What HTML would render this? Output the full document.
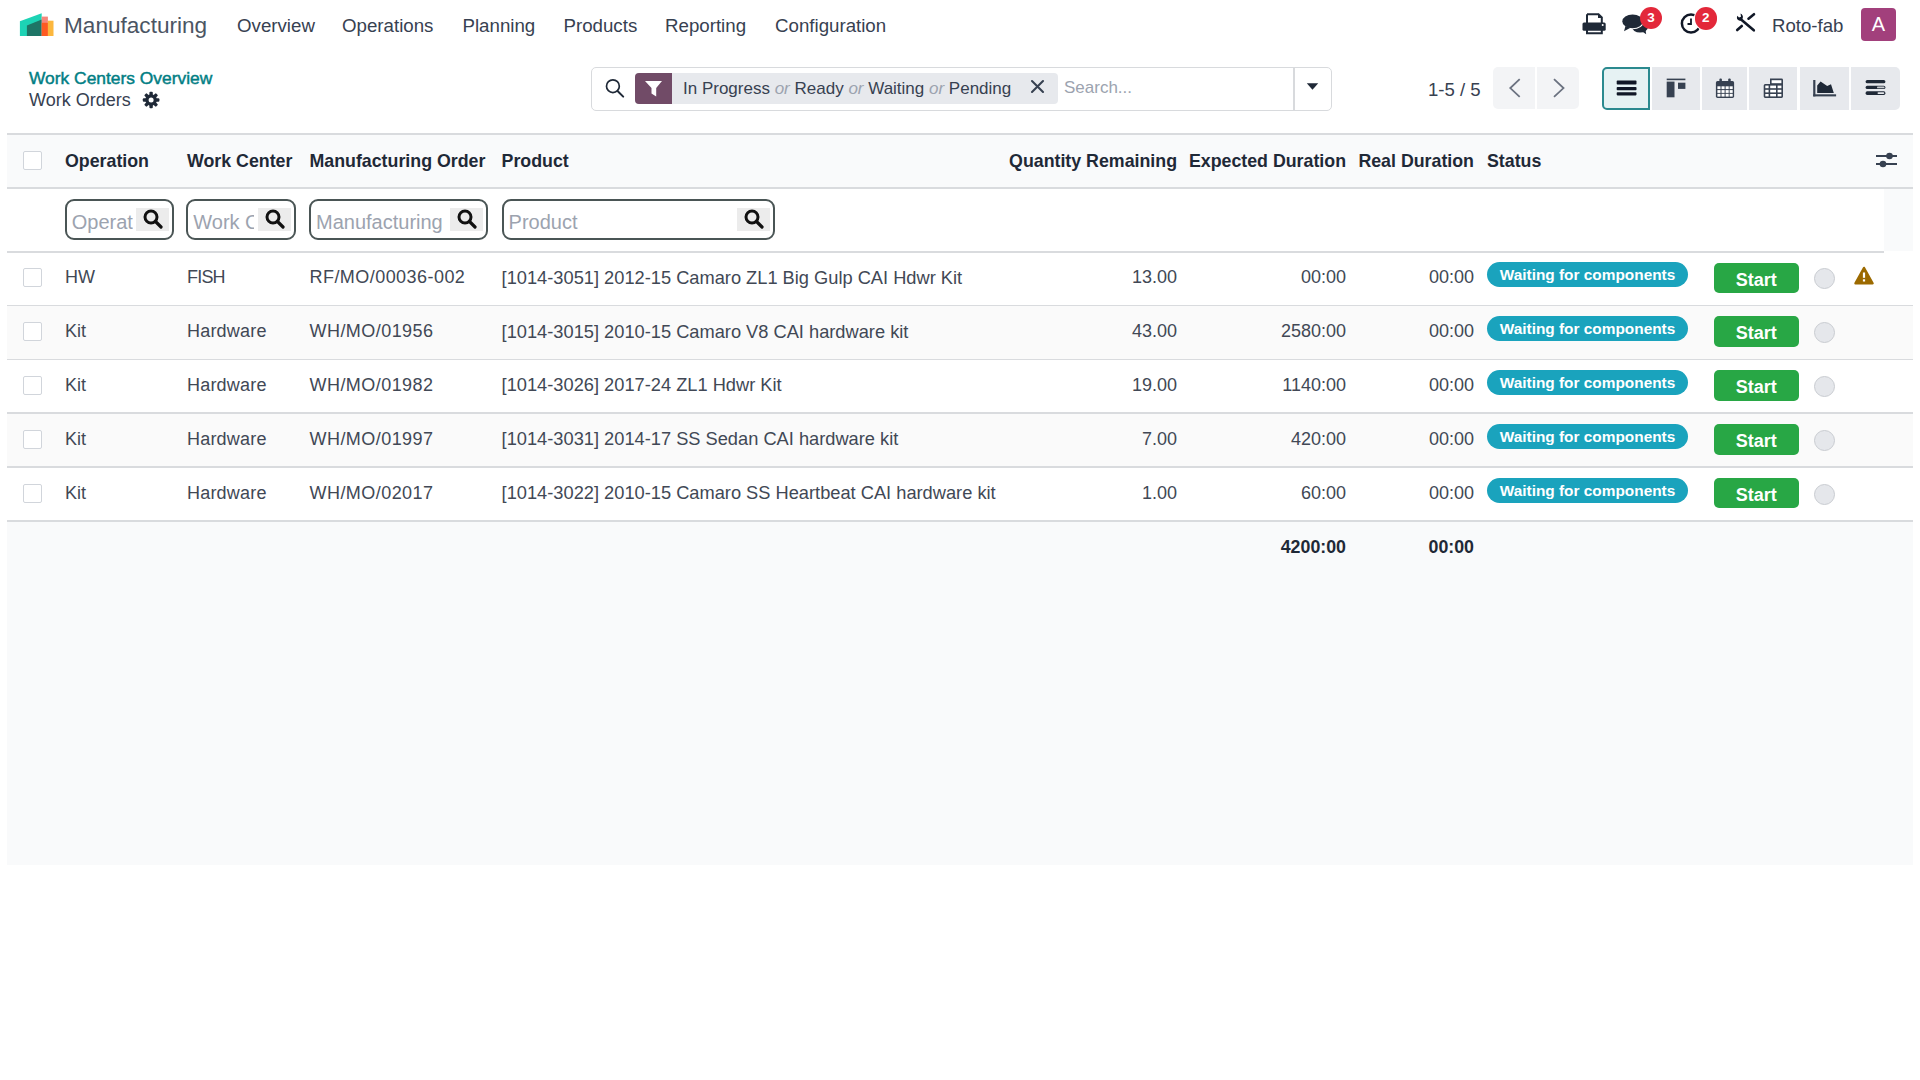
<!DOCTYPE html>
<html><head><meta charset="utf-8">
<style>
*{box-sizing:border-box;margin:0;padding:0}
html,body{width:1920px;height:1080px;background:#fff;overflow:hidden}
body{font-family:"Liberation Sans",sans-serif;color:#374151;position:relative}
.a{position:absolute;white-space:nowrap}
.nav{font-size:18.7px;color:#374151;top:14.8px;line-height:22px}
.ico{position:absolute}
/* table */
.tbl{position:absolute;left:7px;top:133px;width:1906px;height:732px;background:#f9fafb}
.hl{position:absolute;left:0;height:1.5px;background:#d9dbde}
.row{position:absolute;left:0;width:1906px;height:54px}
.cell{position:absolute;top:0;height:100%;display:flex;align-items:center;font-size:18px;color:#414855;white-space:nowrap}
.r{justify-content:flex-end}
.hdr{font-weight:bold;color:#1f2937;font-size:17.8px}
.cb{position:absolute;left:16px;width:19px;height:19px;border:1.5px solid #d1d5db;border-radius:2px;background:#fff}
.badge{position:absolute;left:1480px;width:201px;height:25px;border-radius:13px;background:#1aa3bd;color:#fff;font-weight:bold;font-size:15.4px;line-height:25px;text-align:center}
.start{position:absolute;left:1706.5px;width:85.5px;height:30.5px;border-radius:5px;background:#28a745;color:#fff;font-weight:bold;font-size:18px;line-height:31px;padding-top:2px;text-align:center}
.circ{position:absolute;left:1807px;width:21px;height:21px;border-radius:50%;background:#e5e7eb;border:1.5px solid #c9ccd1}
.fin{position:absolute;top:12px;height:41px;border:2px solid #4a5555;border-radius:9px;background:#fff;overflow:hidden}
.fin .ph{position:absolute;left:5px;top:2.5px;height:37px;line-height:37px;font-size:20px;color:#9ca3af;overflow:hidden;white-space:nowrap}
.fin .sb{position:absolute;top:7px;width:33px;height:23px;background:#ececec}
</style></head><body>

<!-- NAVBAR -->
<svg class="ico" style="left:19px;top:13px" width="36" height="24" viewBox="19 13 36 24">
<polygon points="19.9,21.3 41.7,13.3 41.7,36 19.9,36" fill="#1dd3b5"/>
<polygon points="26.9,25.5 41.7,19.6 41.7,36 26.9,36" fill="#1e7566"/>
<rect x="41.7" y="16.6" width="6.2" height="19.4" fill="#f6867b"/>
<rect x="41.7" y="22.8" width="6.2" height="13.2" fill="#fe5a22"/>
<rect x="47.9" y="20.7" width="5.6" height="15.3" fill="#fcb73e"/>
</svg>
<div class="a" style="left:64px;top:13px;font-size:22.6px;line-height:26px;color:#4b5563">Manufacturing</div>
<div class="a nav" style="left:237px">Overview</div>
<div class="a nav" style="left:342px">Operations</div>
<div class="a nav" style="left:462.5px">Planning</div>
<div class="a nav" style="left:563.5px">Products</div>
<div class="a nav" style="left:665px">Reporting</div>
<div class="a nav" style="left:775px">Configuration</div>

<div class="a" style="left:1772px;top:15px;font-size:18.6px;line-height:22px;color:#374151">Roto-fab</div>
<div class="a" style="left:1861px;top:8px;width:35px;height:33px;border-radius:4px;background:#a2407c;color:#fff;font-size:20px;line-height:33px;text-align:center">A</div>

<!-- CONTROL PANEL -->
<div class="a" style="left:29px;top:68px;font-size:17.4px;line-height:20px;-webkit-text-stroke:0.45px #017e84;color:#017e84">Work Centers Overview</div>
<div class="a" style="left:29px;top:90px;font-size:18px;line-height:21px;color:#374151">Work Orders</div>

<!-- search -->
<div class="a" style="left:591px;top:67px;width:741px;height:44px;border:1.5px solid #d8dadd;border-radius:5px;background:#fff"></div>
<div class="a" style="left:1293px;top:68px;width:1.5px;height:42px;background:#d8dadd"></div>
<div class="a" style="left:635px;top:73px;width:423px;height:31px;border-radius:4px;background:#e7e9ed"></div>
<div class="a" style="left:635px;top:73px;width:37px;height:31px;border-radius:4px 0 0 4px;background:#714b67"></div>
<div class="a" style="left:683px;top:78.5px;font-size:17px;line-height:20px;color:#374151">In Progress <i style="color:#9ca3af">or</i> Ready <i style="color:#9ca3af">or</i> Waiting <i style="color:#9ca3af">or</i> Pending</div>
<div class="a" style="left:1064px;top:78px;font-size:17px;line-height:20px;color:#9ca3af">Search...</div>

<!-- pager -->
<div class="a" style="left:1428px;top:79px;font-size:18.6px;line-height:21px;color:#374151">1-5 / 5</div>
<div class="a" style="left:1493px;top:67px;width:42px;height:42px;border-radius:5px 0 0 5px;background:#f3f4f6"></div>
<div class="a" style="left:1537px;top:67px;width:42px;height:42px;border-radius:0 5px 5px 0;background:#f3f4f6"></div>

<!-- view switcher -->
<div class="a" style="left:1602px;top:67px;width:48px;height:43px;border:2px solid #2b8a8f;border-radius:5px 0 0 5px;background:#e6f2f3"></div>
<div class="a" style="left:1652px;top:67px;width:48px;height:43px;background:#e7e9ed"></div>
<div class="a" style="left:1702px;top:67px;width:45px;height:43px;background:#e7e9ed"></div>
<div class="a" style="left:1749px;top:67px;width:48px;height:43px;background:#e7e9ed"></div>
<div class="a" style="left:1800px;top:67px;width:49px;height:43px;background:#e7e9ed"></div>
<div class="a" style="left:1851px;top:67px;width:49px;height:43px;border-radius:0 5px 5px 0;background:#e7e9ed"></div>


<!-- nav icons -->
<svg class="ico" style="left:1580px;top:11px" width="28" height="26" viewBox="1580 11 28 26">
<path d="M1587 14.2 H1598.5 L1601.8 17.5 V23" fill="none" stroke="#1f2937" stroke-width="2"/>
<path d="M1587 14.2 V23" stroke="#1f2937" stroke-width="2"/>
<path d="M1598 13.5 V18 H1602.5 Z" fill="#1f2937"/>
<rect x="1582.5" y="22.5" width="23.2" height="8.2" rx="1.5" fill="#1f2937"/>
<circle cx="1602.7" cy="25" r="1" fill="#fff"/>
<path d="M1587 29 V33.3 H1601.8 V29" fill="none" stroke="#1f2937" stroke-width="2"/>
</svg>
<svg class="ico" style="left:1620px;top:12px" width="30" height="24" viewBox="1620 12 30 24">
<ellipse cx="1640" cy="27" rx="8" ry="5.6" fill="#1f2937"/>
<path d="M1641.5 31 L1646.2 34.2 L1645.3 28.5 Z" fill="#1f2937"/>
<ellipse cx="1632.6" cy="21.4" rx="11.3" ry="7.8" fill="#fff"/>
<path d="M1624.8 25.5 L1622.9 32.3 L1631.5 28.2 Z" fill="#fff"/>
<ellipse cx="1632.6" cy="21.4" rx="10.3" ry="6.8" fill="#1f2937"/>
<path d="M1625.5 26 L1624 31.2 L1630.5 27.8 Z" fill="#1f2937"/>
</svg>
<div class="a" style="left:1640px;top:7px;width:22px;height:22px;border-radius:50%;background:#e3283a;color:#fff;font-weight:bold;font-size:13.5px;line-height:22px;text-align:center">3</div>
<svg class="ico" style="left:1679px;top:11px" width="26" height="26" viewBox="1679 11 26 26">
<circle cx="1691" cy="23.5" r="9.1" fill="none" stroke="#111827" stroke-width="2.5"/>
<path d="M1691 18.5 V24 H1687.5" fill="none" stroke="#111827" stroke-width="1.8"/>
</svg>
<div class="a" style="left:1694.5px;top:7px;width:22.5px;height:22.5px;border-radius:50%;background:#e3283a;color:#fff;font-weight:bold;font-size:13.5px;line-height:22px;text-align:center;box-shadow:0 0 0 1px #fff">2</div>
<svg class="ico" style="left:1734px;top:11px" width="24" height="23" viewBox="1734 11 24 23">
<path d="M1740.5 19 L1753.8 30.3" stroke="#111827" stroke-width="2.6" stroke-linecap="round"/>
<path d="M1737.3 15.8 Q1736 19.5 1739 20.5 Q1742 21.2 1742.8 18 Q1743.5 15 1740.5 13.5 L1741 16.7 L1739 17.5 Z" fill="#111827"/>
<path d="M1748.5 18.7 L1754 14.2" stroke="#111827" stroke-width="2.6" stroke-linecap="round"/>
<path d="M1737.2 30 L1741.8 26" stroke="#111827" stroke-width="2.6" stroke-linecap="round"/>
</svg>
<svg class="ico" style="left:141px;top:91px" width="20" height="18" viewBox="141 91 20 18">
<g transform="translate(151.1 100)">
<circle r="5.8" fill="#1f2937"/>
<g fill="#1f2937">
<rect x="-1.7" y="-8.3" width="3.4" height="4" rx="1"/>
<rect x="-1.7" y="-8.3" width="3.4" height="4" rx="1" transform="rotate(45)"/>
<rect x="-1.7" y="-8.3" width="3.4" height="4" rx="1" transform="rotate(90)"/>
<rect x="-1.7" y="-8.3" width="3.4" height="4" rx="1" transform="rotate(135)"/>
<rect x="-1.7" y="-8.3" width="3.4" height="4" rx="1" transform="rotate(180)"/>
<rect x="-1.7" y="-8.3" width="3.4" height="4" rx="1" transform="rotate(225)"/>
<rect x="-1.7" y="-8.3" width="3.4" height="4" rx="1" transform="rotate(270)"/>
<rect x="-1.7" y="-8.3" width="3.4" height="4" rx="1" transform="rotate(315)"/>
</g>
<circle r="2.5" fill="#fff"/>
</g>
</svg>
<!-- search icons -->
<svg class="ico" style="left:602px;top:76px" width="26" height="24" viewBox="602 76 26 24">
<circle cx="612.9" cy="86.2" r="6.4" fill="none" stroke="#1f2937" stroke-width="1.7"/>
<path d="M617.8 91.3 L623.2 96.6" stroke="#1f2937" stroke-width="2" stroke-linecap="round"/>
</svg>
<svg class="ico" style="left:640px;top:78px" width="26" height="22" viewBox="640 78 26 22">
<path d="M645 81 H662 L656.2 88 V96.5 L651.5 93.5 V88 Z" fill="#fff"/>
</svg>
<svg class="ico" style="left:1028px;top:78px" width="20" height="18" viewBox="1028 78 20 18">
<path d="M1032 81 L1043 92 M1043 81 L1032 92" stroke="#374151" stroke-width="2.1" stroke-linecap="round"/>
</svg>
<svg class="ico" style="left:1304px;top:80px" width="16" height="12" viewBox="1304 80 16 12">
<path d="M1306.8 83.3 H1318.2 L1312.5 89.8 Z" fill="#1f2937"/>
</svg>
<!-- pager chevrons -->
<svg class="ico" style="left:1505px;top:76px" width="64" height="24" viewBox="1505 76 64 24">
<path d="M1519.7 79.2 L1510.3 88.1 L1519.7 96.8" fill="none" stroke="#6b7280" stroke-width="1.8"/>
<path d="M1554 79.2 L1563.5 88.1 L1554 96.8" fill="none" stroke="#6b7280" stroke-width="1.8"/>
</svg>
<!-- view icons -->
<svg class="ico" style="left:1600px;top:66px" width="300" height="46" viewBox="1600 66 300 46">
<rect x="1616.7" y="80.6" width="19.8" height="4" rx="0.8" fill="#111827"/>
<rect x="1616.7" y="86.9" width="19.8" height="3.4" rx="0.8" fill="#111827"/>
<rect x="1616.7" y="92.3" width="19.8" height="3.1" rx="0.8" fill="#111827"/>
<rect x="1666.7" y="78.6" width="18.7" height="1.6" fill="#374151"/>
<rect x="1666.7" y="81.6" width="7.8" height="15.7" fill="#374151"/>
<rect x="1678" y="82.7" width="7.4" height="6.2" fill="#374151"/>
<rect x="1715.9" y="81.1" width="18.2" height="16.8" rx="1.6" fill="#374151"/>
<rect x="1719.4" y="78.5" width="2.5" height="4.2" rx="1" fill="#374151"/>
<rect x="1728.2" y="78.5" width="2.5" height="4.2" rx="1" fill="#374151"/>
<g fill="#fff">
<rect x="1717.4" y="86.3" width="3.1" height="2.8"/><rect x="1721.5" y="86.3" width="3.1" height="2.8"/><rect x="1725.6" y="86.3" width="3.1" height="2.8"/><rect x="1729.6" y="86.3" width="3.1" height="2.8"/>
<rect x="1717.4" y="90.1" width="3.1" height="2.8"/><rect x="1721.5" y="90.1" width="3.1" height="2.8"/><rect x="1725.6" y="90.1" width="3.1" height="2.8"/><rect x="1729.6" y="90.1" width="3.1" height="2.8"/>
<rect x="1717.4" y="93.8" width="3.1" height="2.8"/><rect x="1721.5" y="93.8" width="3.1" height="2.8"/><rect x="1725.6" y="93.8" width="3.1" height="2.8"/><rect x="1729.6" y="93.8" width="3.1" height="2.8"/>
</g>
<path d="M1770 78.6 H1781.5 Q1783 78.6 1783 80 V96.5 Q1783 97.9 1781.5 97.9 H1765.2 Q1763.7 97.9 1763.7 96.5 V85.5 Q1763.7 84 1765.2 84 H1770 Z" fill="#374151"/>
<g fill="#fff">
<rect x="1771.6" y="80.2" width="9.8" height="3"/>
<rect x="1765.3" y="85.6" width="3.3" height="2.6"/><rect x="1770.2" y="85.6" width="5.8" height="2.6"/><rect x="1777.6" y="85.6" width="3.8" height="2.6"/>
<rect x="1765.3" y="89.8" width="3.3" height="2.6"/><rect x="1770.2" y="89.8" width="5.8" height="2.6"/><rect x="1777.6" y="89.8" width="3.8" height="2.6"/>
<rect x="1765.3" y="94" width="3.3" height="2.4"/><rect x="1770.2" y="94" width="5.8" height="2.4"/><rect x="1777.6" y="94" width="3.8" height="2.4"/>
</g>
<rect x="1813.2" y="80" width="2.2" height="16.4" fill="#374151"/>
<rect x="1813.2" y="94.3" width="22.9" height="2.1" fill="#374151"/>
<path d="M1817.2 92.9 V85.5 L1820.6 81.5 L1827.2 86 L1831 84.3 L1833.8 92.9 Z" fill="#1f2937"/>
<rect x="1865.6" y="80" width="19.8" height="3.3" rx="1.6" fill="#1f2937"/>
<rect x="1865.6" y="85.8" width="19.8" height="3.2" rx="1.6" fill="#1f2937"/>
<rect x="1865.6" y="91.3" width="19.8" height="3.6" rx="1.6" fill="#1f2937"/>
<rect x="1877" y="86.5" width="7.5" height="1.8" rx="0.9" fill="#c8cbd0"/>
<rect x="1877.5" y="92.2" width="6.8" height="1.8" rx="0.9" fill="#e5e7eb"/>
</svg>

<!-- TABLE -->
<div class="tbl" id="tbl">
<div class="row" style="top:0;height:54px;background:#f9fafb">
<div class="cb" style="top:18px"></div>
<div class="cell hdr" style="left:58px;padding-top:2px">Operation</div>
<div class="cell hdr" style="left:180px;padding-top:2px">Work Center</div>
<div class="cell hdr" style="left:302.5px;padding-top:2px">Manufacturing Order</div>
<div class="cell hdr" style="left:494.6px;padding-top:2px">Product</div>
<div class="cell hdr r" style="right:736px;padding-top:2px">Quantity Remaining</div>
<div class="cell hdr r" style="right:567px;padding-top:2px">Expected Duration</div>
<div class="cell hdr r" style="right:439px;padding-top:2px">Real Duration</div>
<div class="cell hdr" style="left:1480px;padding-top:2px">Status</div>
<svg class="ico" style="left:1869px;top:18px" width="21" height="18" viewBox="0 0 21 18"><rect x="0" y="4" width="21" height="2" fill="#374151"/><circle cx="13.5" cy="5" r="3.3" fill="#374151"/><rect x="0" y="12" width="21" height="2" fill="#374151"/><circle cx="7" cy="13" r="3.3" fill="#374151"/></svg>
</div>
<div class="row" style="top:54px;height:64px;width:1877px;background:#fff">
<div class="fin" style="left:57.75px;width:109px"><div class="ph" style="width:61px">Operation</div><div class="sb" style="left:69.5px"></div><svg style="position:absolute;left:76.5px;top:7.5px" width="20" height="20" viewBox="0 0 20 20"><circle cx="8" cy="8" r="6" fill="none" stroke="#111" stroke-width="3"/><line x1="12.5" y1="12.5" x2="18" y2="18" stroke="#111" stroke-width="3.2" stroke-linecap="round"/></svg></div>
<div class="fin" style="left:179.25px;width:109.5px"><div class="ph" style="width:61px">Work Center</div><div class="sb" style="left:69.3px"></div><svg style="position:absolute;left:76.3px;top:7.5px" width="20" height="20" viewBox="0 0 20 20"><circle cx="8" cy="8" r="6" fill="none" stroke="#111" stroke-width="3"/><line x1="12.5" y1="12.5" x2="18" y2="18" stroke="#111" stroke-width="3.2" stroke-linecap="round"/></svg></div>
<div class="fin" style="left:302px;width:178.5px"><div class="ph" style="width:131px">Manufacturing Order</div><div class="sb" style="left:139px"></div><svg style="position:absolute;left:146px;top:7.5px" width="20" height="20" viewBox="0 0 20 20"><circle cx="8" cy="8" r="6" fill="none" stroke="#111" stroke-width="3"/><line x1="12.5" y1="12.5" x2="18" y2="18" stroke="#111" stroke-width="3.2" stroke-linecap="round"/></svg></div>
<div class="fin" style="left:494.6px;width:273px"><div class="ph" style="width:400px">Product</div><div class="sb" style="left:233.5px"></div><svg style="position:absolute;left:240.5px;top:7.5px" width="20" height="20" viewBox="0 0 20 20"><circle cx="8" cy="8" r="6" fill="none" stroke="#111" stroke-width="3"/><line x1="12.5" y1="12.5" x2="18" y2="18" stroke="#111" stroke-width="3.2" stroke-linecap="round"/></svg></div>
</div>
<div class="row" style="top:118.0px;height:53.8px;background:#fff">
<div class="cb" style="top:17.4px"></div>
<div class="cell" style="left:58px;">HW</div>
<div class="cell" style="left:180px;letter-spacing:-0.8px">FISH</div>
<div class="cell" style="left:302.5px;letter-spacing:0.45px">RF/MO/00036-002</div>
<div class="cell" style="left:494.6px;font-size:18.25px">[1014-3051] 2012-15 Camaro ZL1 Big Gulp CAI Hdwr Kit</div>
<div class="cell r" style="right:736px">13.00</div>
<div class="cell r" style="right:567px">00:00</div>
<div class="cell r" style="right:439px">00:00</div>
<div class="badge" style="top:11.4px">Waiting for components</div>
<div class="start" style="top:11.7px">Start</div>
<div class="circ" style="top:17.4px"></div>
<svg class="ico" style="left:1847px;top:15px" width="20" height="19" viewBox="0 0 20 19"><path d="M10 1.8 L18.6 17.4 L1.4 17.4 Z" fill="#9c6a00" stroke="#9c6a00" stroke-width="2.2" stroke-linejoin="round"/><rect x="8.9" y="6.5" width="2.2" height="5.3" fill="#fff"/><rect x="8.9" y="13.3" width="2.2" height="2.2" fill="#fff"/></svg>
</div>
<div class="row" style="top:171.8px;height:53.8px;background:#fafafa">
<div class="cb" style="top:17.4px"></div>
<div class="cell" style="left:58px;">Kit</div>
<div class="cell" style="left:180px;letter-spacing:0.2px">Hardware</div>
<div class="cell" style="left:302.5px;letter-spacing:0.45px">WH/MO/01956</div>
<div class="cell" style="left:494.6px;font-size:18.25px">[1014-3015] 2010-15 Camaro V8 CAI hardware kit</div>
<div class="cell r" style="right:736px">43.00</div>
<div class="cell r" style="right:567px">2580:00</div>
<div class="cell r" style="right:439px">00:00</div>
<div class="badge" style="top:11.4px">Waiting for components</div>
<div class="start" style="top:11.7px">Start</div>
<div class="circ" style="top:17.4px"></div>
</div>
<div class="row" style="top:225.6px;height:53.8px;background:#fff">
<div class="cb" style="top:17.4px"></div>
<div class="cell" style="left:58px;">Kit</div>
<div class="cell" style="left:180px;letter-spacing:0.2px">Hardware</div>
<div class="cell" style="left:302.5px;letter-spacing:0.45px">WH/MO/01982</div>
<div class="cell" style="left:494.6px;font-size:18.25px">[1014-3026] 2017-24 ZL1 Hdwr Kit</div>
<div class="cell r" style="right:736px">19.00</div>
<div class="cell r" style="right:567px">1140:00</div>
<div class="cell r" style="right:439px">00:00</div>
<div class="badge" style="top:11.4px">Waiting for components</div>
<div class="start" style="top:11.7px">Start</div>
<div class="circ" style="top:17.4px"></div>
</div>
<div class="row" style="top:279.4px;height:53.8px;background:#fafafa">
<div class="cb" style="top:17.4px"></div>
<div class="cell" style="left:58px;">Kit</div>
<div class="cell" style="left:180px;letter-spacing:0.2px">Hardware</div>
<div class="cell" style="left:302.5px;letter-spacing:0.45px">WH/MO/01997</div>
<div class="cell" style="left:494.6px;font-size:18.25px">[1014-3031] 2014-17 SS Sedan CAI hardware kit</div>
<div class="cell r" style="right:736px">7.00</div>
<div class="cell r" style="right:567px">420:00</div>
<div class="cell r" style="right:439px">00:00</div>
<div class="badge" style="top:11.4px">Waiting for components</div>
<div class="start" style="top:11.7px">Start</div>
<div class="circ" style="top:17.4px"></div>
</div>
<div class="row" style="top:333.2px;height:53.8px;background:#fff">
<div class="cb" style="top:17.4px"></div>
<div class="cell" style="left:58px;">Kit</div>
<div class="cell" style="left:180px;letter-spacing:0.2px">Hardware</div>
<div class="cell" style="left:302.5px;letter-spacing:0.45px">WH/MO/02017</div>
<div class="cell" style="left:494.6px;font-size:18.25px">[1014-3022] 2010-15 Camaro SS Heartbeat CAI hardware kit</div>
<div class="cell r" style="right:736px">1.00</div>
<div class="cell r" style="right:567px">60:00</div>
<div class="cell r" style="right:439px">00:00</div>
<div class="badge" style="top:11.4px">Waiting for components</div>
<div class="start" style="top:11.7px">Start</div>
<div class="circ" style="top:17.4px"></div>
</div>
<div class="hl" style="top:0.0px;width:1906px"></div>
<div class="hl" style="top:54.0px;width:1906px"></div>
<div class="hl" style="top:118.0px;width:1877px"></div>
<div class="hl" style="top:171.8px;width:1906px"></div>
<div class="hl" style="top:225.6px;width:1906px"></div>
<div class="hl" style="top:279.4px;width:1906px"></div>
<div class="hl" style="top:333.2px;width:1906px"></div>
<div class="hl" style="top:387.0px;width:1906px"></div>
<div class="row" style="top:388px;height:52px">
<div class="cell hdr r" style="right:567px">4200:00</div>
<div class="cell hdr r" style="right:439px">00:00</div>
</div>
</div>

</body></html>
